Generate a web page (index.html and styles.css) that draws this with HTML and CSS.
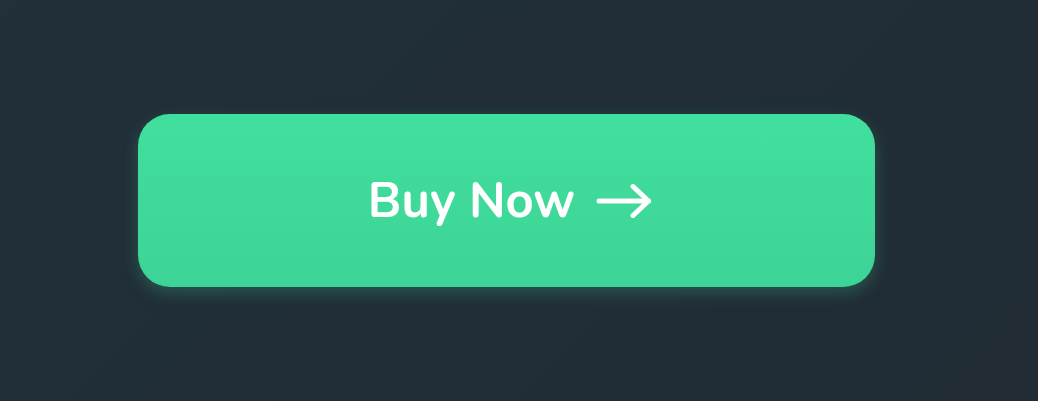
FILE: index.html
```html
<!DOCTYPE html>
<html>
<head>
<meta charset="utf-8">
<link rel="stylesheet" href="styles.css">
</head>
<body>
<main class="stage">
  <button class="buy-btn">
    <span class="label">Buy Now</span>
    <svg class="arrow" width="57" height="34" viewBox="0 0 57 34" fill="none" stroke="#ffffff" stroke-width="5" stroke-linecap="round" stroke-linejoin="round">
      <path d="M3 17 H52.5"/>
      <path d="M37 2.5 L52.5 17 L37 31.5"/>
    </svg>
  </button>
</main>
</body>
</html>
```
FILE: styles.css
```css
html, body {
  margin: 0;
  padding: 0;
}
body {
  width: 1038px;
  height: 401px;
  background: linear-gradient(135deg, #213039 0%, #212c35 100%);
  overflow: hidden;
}
.stage {
  height: 401px;
  display: flex;
  align-items: center;
  padding-left: 138px;
  box-sizing: border-box;
}
.buy-btn {
  width: 737px;
  height: 173px;
  margin-top: -1px;
  border: none;
  border-radius: 32px;
  background: linear-gradient(180deg, #41df9d 0%, #3dd497 100%);
  box-shadow: 0 6px 16px rgba(61, 213, 151, 0.25);
  display: flex;
  align-items: center;
  justify-content: center;
  gap: 21px;
  padding: 0 0 0 8px;
  color: #ffffff;
  font-family: "Nunito", "Lato", "Open Sans", sans-serif;
  font-weight: 700;
  font-size: 49px;
  cursor: pointer;
}
.label {
  line-height: 1;
  letter-spacing: 0;
}
.arrow {
  display: block;
  margin-top: 1px;
}
```
